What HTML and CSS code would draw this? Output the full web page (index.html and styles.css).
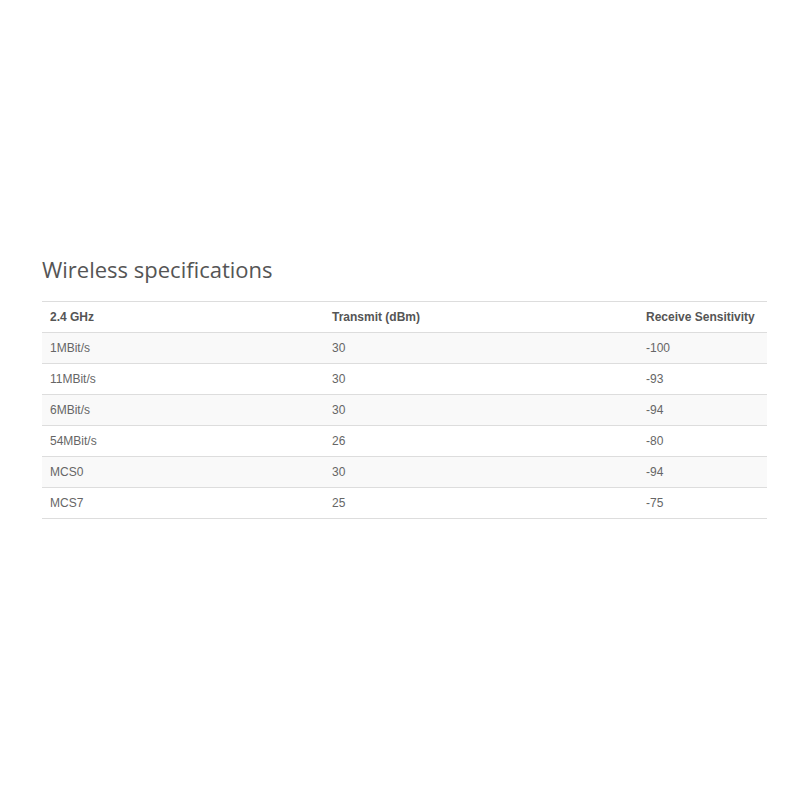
FILE: index.html
```html
<!DOCTYPE html>
<html>
<head>
<meta charset="utf-8">
<link rel="stylesheet" href="styles.css">
</head>
<body>
<main class="page">
  <h2 class="title">Wireless specifications</h2>
  <table class="spec">
    <thead>
      <tr><th class="c1">2.4 GHz</th><th class="c2">Transmit (dBm)</th><th class="c3">Receive Sensitivity</th></tr>
    </thead>
    <tbody>
      <tr><td>1MBit/s</td><td>30</td><td>-100</td></tr>
      <tr><td>11MBit/s</td><td>30</td><td>-93</td></tr>
      <tr><td>6MBit/s</td><td>30</td><td>-94</td></tr>
      <tr><td>54MBit/s</td><td>26</td><td>-80</td></tr>
      <tr><td>MCS0</td><td>30</td><td>-94</td></tr>
      <tr><td>MCS7</td><td>25</td><td>-75</td></tr>
    </tbody>
  </table>
</main>
</body>
</html>
```
FILE: styles.css
```css
html, body { margin: 0; padding: 0; background: #fff; }
.page {
  padding: 257px 0 0 42px;
  width: 725px;
}
.title {
  margin: 0 0 20px 0;
  font-family: "Open Sans", sans-serif;
  font-weight: 400;
  font-size: 22px;
  line-height: 24px;
  color: #555;
}
.spec {
  width: 725px;
  border-collapse: collapse;
  font-family: "Liberation Sans", Arial, sans-serif;
  font-size: 12px;
  line-height: 15px;
  color: #666;
  table-layout: fixed;
}
.spec .c1 { width: 266px; }
.spec .c2 { width: 298px; }
.spec .c3 { width: 113px; }
.spec th, .spec td {
  text-align: left;
  padding: 8px 8px 7px 8px;
  border-top: 1px solid #ddd;
  vertical-align: top;
  white-space: nowrap;
}
.spec th { font-weight: bold; color: #555; }
.spec tbody tr:last-child td { border-bottom: 1px solid #ddd; }
.spec tbody tr:nth-child(odd) { background: #f9f9f9; }
```
